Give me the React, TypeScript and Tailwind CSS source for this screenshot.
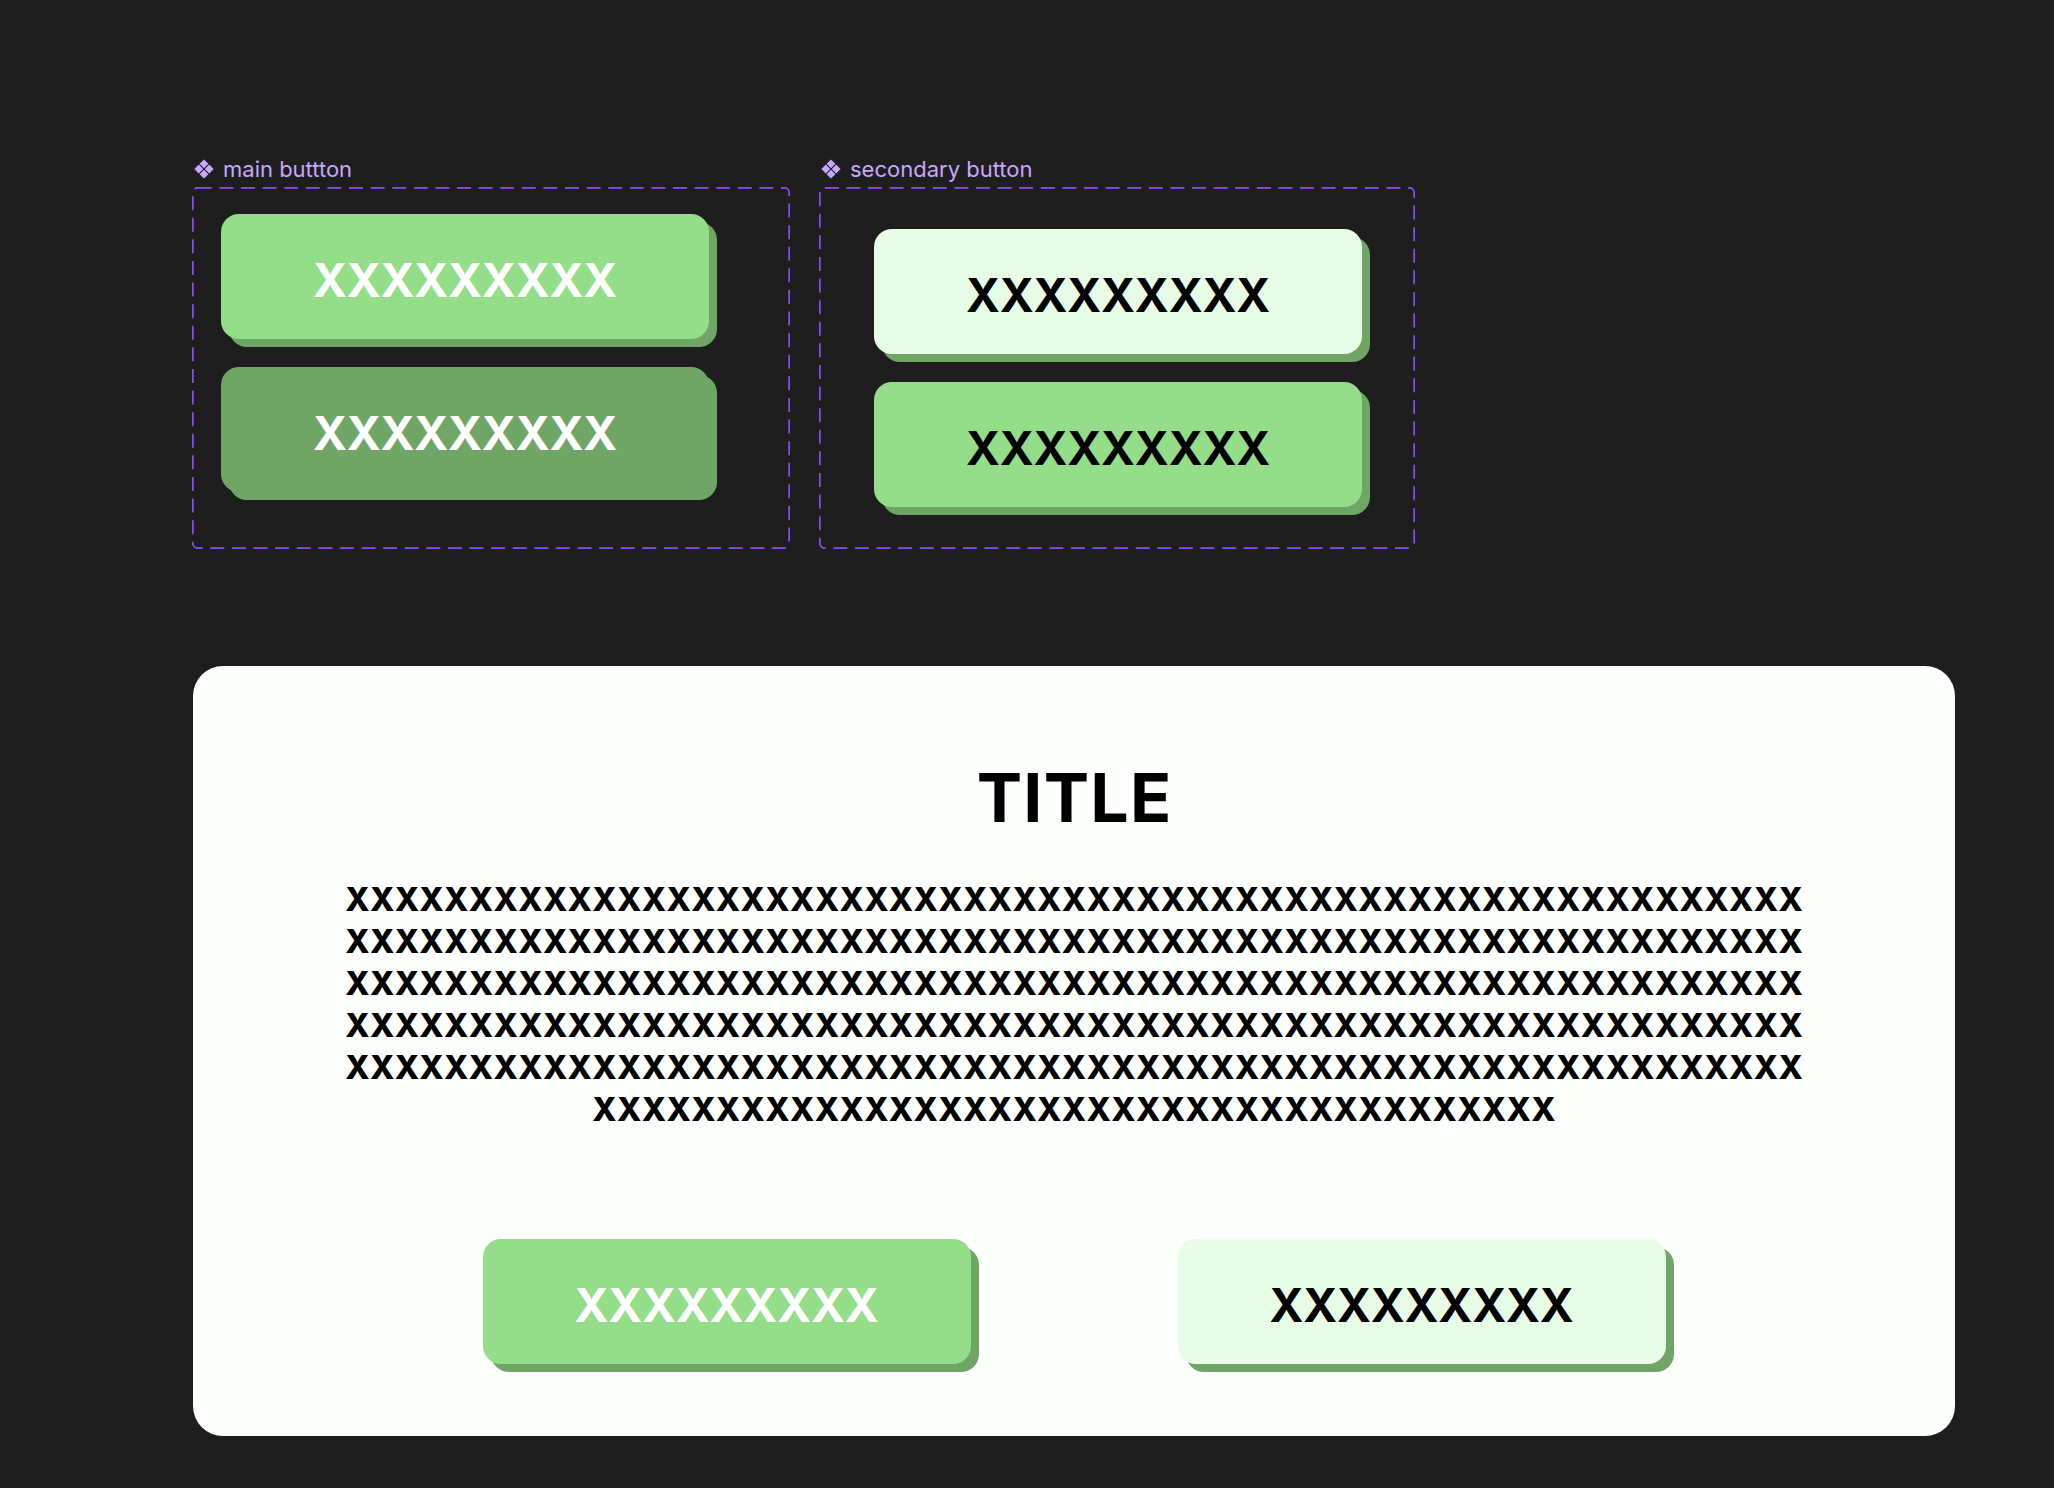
import React from "react";

const FONT = { fontFamily: "Inter, 'Noto Sans', sans-serif" };

function ComponentIcon() {
  return (
    <svg width="20" height="20" viewBox="0 0 20 20" className="shrink-0">
      <polygon points="10,0.4 14.4,4.8 10,9.2 5.6,4.8" fill="#c9a6ff" />
      <polygon points="4.8,5.6 9.2,10 4.8,14.4 0.4,10" fill="#c9a6ff" />
      <polygon points="15.2,5.6 19.6,10 15.2,14.4 10.8,10" fill="#c9a6ff" />
      <polygon points="10,10.8 14.4,15.2 10,19.6 5.6,15.2" fill="#c9a6ff" />
    </svg>
  );
}

function DashedFrame() {
  return (
    <svg className="pointer-events-none absolute inset-0 h-full w-full" preserveAspectRatio="none">
      <rect
        x="0.8"
        y="0.8"
        width="calc(100% - 1.6px)"
        height="calc(100% - 1.6px)"
        rx="5"
        ry="5"
        fill="none"
        stroke="#8d4cf2"
        strokeWidth="1.8"
        strokeDasharray="14 7.6"
      />
    </svg>
  );
}

type Variant = "primary" | "pressed" | "secondary" | "secondaryGreen";

function Btn({ variant }: { variant: Variant }) {
  const bg =
    variant === "primary"
      ? "bg-[#95de89]"
      : variant === "pressed"
      ? "bg-[#6fa666]"
      : variant === "secondary"
      ? "bg-[#e8fde5]"
      : "bg-[#95de89]";
  const color = variant === "primary" || variant === "pressed" ? "text-white" : "text-black";
  return (
    <div
      className={`flex h-[125px] w-[488px] shrink-0 items-center justify-center rounded-[18px] pt-[7px] shadow-[8px_8px_0_0_#6fa666] ${bg} ${color} text-[46px] font-bold leading-none tracking-[-0.2px]`}
      style={FONT}
    >
      XXXXXXXXX
    </div>
  );
}

function Group({
  label,
  width,
  padL,
  padT,
  children,
}: {
  label: string;
  width: string;
  padL: string;
  padT: string;
  children: React.ReactNode;
}) {
  return (
    <div className="flex flex-col">
      <div
        className="mb-[5px] flex h-[26px] items-center gap-[9px] pl-[2px] text-[22px] leading-[26px] text-[#c9a6ff]"
        style={FONT}
      >
        <ComponentIcon />
        <span>{label}</span>
      </div>
      <div className={`relative h-[362px] ${width} ${padL} ${padT}`}>
        <DashedFrame />
        <div className="flex flex-col gap-[28px]">{children}</div>
      </div>
    </div>
  );
}

const FULL = "X".repeat(59);
const LAST = "X".repeat(39);

export default function App() {
  return (
    <div className="min-h-[1488px] w-full bg-[#1e1e1e] pb-[52px]">
      <div className="flex gap-[29px] pl-[192px] pt-[156px]">
        <Group label="main buttton" width="w-[598px]" padL="pl-[29px]" padT="pt-[27px]">
          <Btn variant="primary" />
          <Btn variant="pressed" />
        </Group>
        <Group label="secondary button" width="w-[596px]" padL="pl-[55px]" padT="pt-[42px]">
          <Btn variant="secondary" />
          <Btn variant="secondaryGreen" />
        </Group>
      </div>

      <div className="ml-[193px] mt-[117px] flex h-[770px] w-[1762px] flex-col items-center rounded-[30px] bg-[#fdfffc] pt-[97px]">
        <h1 className="pl-[1.2px] text-[68px] font-bold leading-none tracking-[1.2px] text-black" style={FONT}>
          TITLE
        </h1>
        <div
          className="mt-[48px] flex flex-col items-center pl-[0.35px] text-[32px] font-extrabold leading-[42px] tracking-[0.35px] text-black"
          style={FONT}
        >
          <span>{FULL}</span>
          <span>{FULL}</span>
          <span>{FULL}</span>
          <span>{FULL}</span>
          <span>{FULL}</span>
          <span>{LAST}</span>
        </div>
        <div className="mt-[108px] flex gap-[207px]">
          <Btn variant="primary" />
          <Btn variant="secondary" />
        </div>
      </div>
    </div>
  );
}
